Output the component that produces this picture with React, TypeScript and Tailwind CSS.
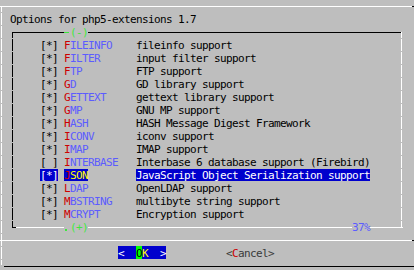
type Item = { name: string; desc: string; on: boolean };

// php5-extensions option list, in port order. JSON is the cursor row.
const items: Item[] = [
  { name: "FILEINFO", desc: "fileinfo support", on: true },
  { name: "FILTER", desc: "input filter support", on: true },
  { name: "FTP", desc: "FTP support", on: true },
  { name: "GD", desc: "GD library support", on: true },
  { name: "GETTEXT", desc: "gettext library support", on: true },
  { name: "GMP", desc: "GNU MP support", on: true },
  { name: "HASH", desc: "HASH Message Digest Framework", on: true },
  { name: "ICONV", desc: "iconv support", on: true },
  { name: "IMAP", desc: "IMAP support", on: true },
  { name: "INTERBASE", desc: "Interbase 6 database support (Firebird)", on: false },
  { name: "JSON", desc: "JavaScript Object Serialization support", on: true },
  { name: "LDAP", desc: "OpenLDAP support", on: true },
  { name: "MBSTRING", desc: "multibyte string support", on: true },
  { name: "MCRYPT", desc: "Encryption support", on: true },
];

const SELECTED = "JSON";

// Every terminal cell is 6px wide and 13px tall; the first pixel row of a
// cell is blank, which is what makes the vertical borders look dashed.
function OuterV() {
  return (
    <div className="w-[6px] shrink-0 pl-[3px] pt-px">
      <div className="h-[12px] w-px bg-white" />
    </div>
  );
}

function InnerLeft() {
  return (
    <div className="w-[6px] shrink-0 pl-[2px] pt-px">
      <div className="h-[12px] w-px bg-black" />
    </div>
  );
}

function InnerRight() {
  return (
    <div className="w-[6px] shrink-0 pl-px pt-px">
      <div className="h-[12px] w-px bg-white" />
    </div>
  );
}

function ItemRow({ item }: { item: Item }) {
  const sel = item.name === SELECTED;
  return (
    <div className="flex h-[13px]">
      <OuterV />
      <div className="w-[6px] shrink-0" />
      <InnerLeft />
      <div className="w-[24px] shrink-0" />
      <div
        className={`mt-px h-[12px] w-[18px] shrink-0 whitespace-pre ${
          sel ? "bg-[#0000cd] text-white" : "text-black"
        }`}
      >
        {item.on ? "[*]" : "[ ]"}
      </div>
      <div className="w-[6px] shrink-0" />
      <div className="w-[72px] shrink-0 pt-px">
        <div className={`flex h-[12px] w-fit whitespace-pre ${sel ? "bg-[#0000cd]" : ""}`}>
          <span className="text-[#cd0000]">{item.name[0]}</span>
          <span className={sel ? "text-[#ffff00]" : "text-[#5c5cff]"}>{item.name.slice(1)}</span>
        </div>
      </div>
      <div className="w-[264px] shrink-0 pt-px">
        <div
          className={`h-[12px] w-fit whitespace-pre ${
            sel ? "bg-[#0000cd] text-white" : "text-black"
          }`}
        >
          {item.desc}
        </div>
      </div>
      <InnerRight />
    </div>
  );
}

export default function App() {
  return (
    <div className="h-[270px] w-[414px] overflow-hidden bg-[#bebebe] font-['DejaVu_Sans_Mono',monospace] text-[11px] leading-[13px] tracking-[-0.623px] text-black">
      <div className="-mt-px -ml-[2px] flex w-[420px] flex-col">
        {/* dialog top edge */}
        <div className="flex h-[13px] items-start pt-[7px]">
          <div className="w-[2px] shrink-0" />
          <div className="h-px w-px shrink-0 bg-white" />
          <div className="h-[6px] w-px shrink-0 bg-white" />
          <div className="h-px w-[410px] shrink-0 bg-white" />
          <div className="h-px w-[6px] shrink-0 bg-black" />
        </div>

        {/* title */}
        <div className="flex h-[13px]">
          <OuterV />
          <div className="w-[6px] shrink-0" />
          <div className="mt-px w-[186px] shrink-0 whitespace-pre">Options for php5-extensions 1.7</div>
        </div>

        {/* list box top, with the scroll-up marker */}
        <div className="flex h-[13px] items-start">
          <OuterV />
          <div className="w-[6px] shrink-0" />
          <div className="flex w-[6px] shrink-0 items-start">
            <div className="w-[2px] shrink-0" />
            <div className="mt-[7px] h-[6px] w-px shrink-0 bg-black" />
            <div className="mt-[7px] h-px w-[3px] shrink-0 bg-black" />
          </div>
          <div className="mt-[7px] h-px w-[48px] shrink-0 bg-black" />
          <div className="w-[6px] shrink-0">
            <div className="mt-[7px] h-px w-[5px] bg-[#3ee83e]" />
          </div>
          <div className="mt-px w-[18px] shrink-0 whitespace-pre text-[#3ee83e]">(-)</div>
          <div className="mt-[7px] h-px w-[312px] shrink-0 bg-black" />
          <div className="flex w-[6px] shrink-0 items-start">
            <div className="mt-[7px] h-px w-px shrink-0 bg-black" />
            <div className="mt-[7px] h-[6px] w-px shrink-0 bg-white" />
          </div>
        </div>

        {items.map((it) => (
          <ItemRow key={it.name} item={it} />
        ))}

        {/* list box bottom, scroll-down marker and position */}
        <div className="flex h-[13px] items-start">
          <OuterV />
          <div className="w-[6px] shrink-0" />
          <div className="flex w-[6px] shrink-0 items-start">
            <div className="w-[2px] shrink-0" />
            <div className="mt-px h-[7px] w-px shrink-0 bg-black" />
            <div className="mt-[7px] h-px w-[3px] shrink-0 bg-black" />
          </div>
          <div className="mt-[7px] h-px w-[48px] shrink-0 bg-white" />
          <div className="w-[6px] shrink-0">
            <div className="mt-[9px] ml-px h-[2px] w-[2px] bg-[#3ee83e]" />
          </div>
          <div className="mt-px w-[18px] shrink-0 whitespace-pre text-[#3ee83e]">(+)</div>
          <div className="mt-[7px] h-px w-[264px] shrink-0 bg-white" />
          <div className="mt-px w-[18px] shrink-0 whitespace-pre text-[#5c5cff]">37%</div>
          <div className="mt-[7px] h-px w-[30px] shrink-0 bg-white" />
          <div className="flex w-[6px] shrink-0 items-start">
            <div className="mt-[7px] h-px w-px shrink-0 bg-white" />
            <div className="mt-px h-[7px] w-px shrink-0 bg-white" />
            <div className="mt-[7px] h-px w-px shrink-0 bg-white" />
          </div>
        </div>

        {/* separator above the buttons */}
        <div className="flex h-[13px] items-start">
          <div className="flex w-[6px] shrink-0 items-start">
            <div className="w-[2px] shrink-0" />
            <div className="mt-[7px] h-px w-px shrink-0 bg-white" />
            <div className="mt-px h-[12px] w-px shrink-0 bg-white" />
            <div className="mt-[7px] h-px w-[3px] shrink-0 bg-white" />
          </div>
          <div className="mt-[7px] h-px w-[408px] shrink-0 bg-white" />
          <div className="mt-[7px] h-px w-[6px] shrink-0 bg-black" />
        </div>

        {/* buttons */}
        <div className="flex h-[13px] items-start">
          <OuterV />
          <div className="w-[114px] shrink-0" />
          <div className="flex h-[13px] shrink-0 whitespace-pre bg-[#0000cd]">
            <div className="h-[13px] w-[18px] pt-px text-white">{"<  "}</div>
            <div className="h-[13px] w-[6px] bg-[#00ff00] pt-px text-black">O</div>
            <div className="h-[13px] w-[6px] pt-px text-[#ffff00]">K</div>
            <div className="h-[13px] w-[18px] pt-px text-white">{"  >"}</div>
          </div>
          <div className="w-[60px] shrink-0" />
          <div className="mt-px w-[48px] shrink-0 whitespace-pre text-[#3a3a3a]">
            {"<"}
            <span className="text-[#cd0000]">C</span>
            {"ancel>"}
          </div>
        </div>

        {/* dialog bottom edge */}
        <div className="flex h-[13px] items-start">
          <div className="w-[3px] shrink-0" />
          <div className="mt-px h-[5px] w-px shrink-0 bg-white" />
          <div className="w-[2px] shrink-0" />
          <div className="mt-[7px] h-px w-[414px] shrink-0 bg-black" />
        </div>
      </div>
    </div>
  );
}
